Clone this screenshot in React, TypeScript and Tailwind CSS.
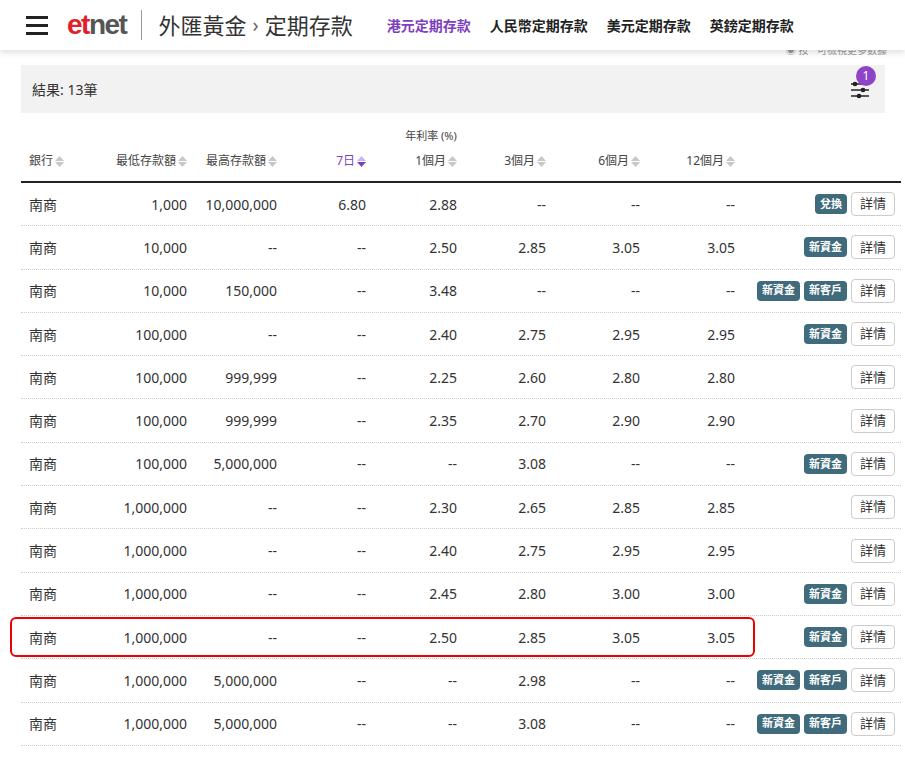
import React from "react";

type Row = { min: string; max: string; d7: string; m1: string; m3: string; m6: string; m12: string; tags: string[]; hl?: boolean };

const rows: Row[] = [
  { min: "1,000", max: "10,000,000", d7: "6.80", m1: "2.88", m3: "--", m6: "--", m12: "--", tags: ["兌換"] },
  { min: "10,000", max: "--", d7: "--", m1: "2.50", m3: "2.85", m6: "3.05", m12: "3.05", tags: ["新資金"] },
  { min: "10,000", max: "150,000", d7: "--", m1: "3.48", m3: "--", m6: "--", m12: "--", tags: ["新資金", "新客戶"] },
  { min: "100,000", max: "--", d7: "--", m1: "2.40", m3: "2.75", m6: "2.95", m12: "2.95", tags: ["新資金"] },
  { min: "100,000", max: "999,999", d7: "--", m1: "2.25", m3: "2.60", m6: "2.80", m12: "2.80", tags: [] },
  { min: "100,000", max: "999,999", d7: "--", m1: "2.35", m3: "2.70", m6: "2.90", m12: "2.90", tags: [] },
  { min: "100,000", max: "5,000,000", d7: "--", m1: "--", m3: "3.08", m6: "--", m12: "--", tags: ["新資金"] },
  { min: "1,000,000", max: "--", d7: "--", m1: "2.30", m3: "2.65", m6: "2.85", m12: "2.85", tags: [] },
  { min: "1,000,000", max: "--", d7: "--", m1: "2.40", m3: "2.75", m6: "2.95", m12: "2.95", tags: [] },
  { min: "1,000,000", max: "--", d7: "--", m1: "2.45", m3: "2.80", m6: "3.00", m12: "3.00", tags: ["新資金"] },
  { min: "1,000,000", max: "--", d7: "--", m1: "2.50", m3: "2.85", m6: "3.05", m12: "3.05", tags: ["新資金"], hl: true },
  { min: "1,000,000", max: "5,000,000", d7: "--", m1: "--", m3: "2.98", m6: "--", m12: "--", tags: ["新資金", "新客戶"] },
  { min: "1,000,000", max: "5,000,000", d7: "--", m1: "--", m3: "3.08", m6: "--", m12: "--", tags: ["新資金", "新客戶"] },
];

const grid = "grid grid-cols-[80px_94px_90px_89px_91px_89px_94px_95px_1fr]";

function Sort({ active }: { active?: boolean }) {
  return (
    <span className="inline-flex flex-col ml-0.5 leading-none">
      <svg width="9" height="5" viewBox="0 0 9 5"><path d="M0 5L4.5 0L9 5Z" fill={active ? "#c4b5fd" : "#c7c7c7"} /></svg>
      <svg width="9" height="5" viewBox="0 0 9 5" className="mt-[1px]"><path d="M0 0L4.5 5L9 0Z" fill={active ? "#7e3fbf" : "#c7c7c7"} /></svg>
    </span>
  );
}

function H({ label, active, left }: { label: string; active?: boolean; left?: boolean }) {
  return (
    <div className={`flex items-center px-2 ${left ? "justify-start" : "justify-end"} ${active ? "text-[#7e3fbf]" : "text-[#444]"}`}>
      {label}
      <Sort active={active} />
    </div>
  );
}

export default function App() {
  return (
    <div className="w-[905px] h-[757px] overflow-hidden bg-white text-[#333]" style={{ fontFamily: '"Noto Sans", "Noto Sans CJK TC", sans-serif' }}>
      <header className="h-[50px] flex items-center shadow-[0_3px_6px_rgba(0,0,0,0.12)] relative z-10 bg-white">
        <div className="ml-[26px] flex flex-col gap-[5px]">
          <span className="block w-[22px] h-[3px] bg-[#222]" />
          <span className="block w-[22px] h-[3px] bg-[#222]" />
          <span className="block w-[22px] h-[3px] bg-[#222]" />
        </div>
        <span className="ml-[19px] text-[28px] font-bold tracking-[-1.5px] leading-none" style={{ fontFamily: '"Liberation Sans", Arial, sans-serif' }}>
          <span className="text-[#e0202a]">et</span><span className="text-[#555]">net</span>
        </span>
        <span className="ml-[15px] w-px h-[30px] bg-[#999]" />
        <span className="ml-[16px] text-[22px] text-[#333]">外匯黃金</span>
        <span className="mx-[6px] text-[20px] text-[#666]">›</span>
        <span className="text-[22px] text-[#333]">定期存款</span>
        <nav className="ml-[34px] flex gap-[19px] text-[14px] font-bold">
          <span className="text-[#7e3fbf]">港元定期存款</span>
          <span className="text-[#222]">人民幣定期存款</span>
          <span className="text-[#222]">美元定期存款</span>
          <span className="text-[#222]">英鎊定期存款</span>
        </nav>
      </header>

      <div className="h-[15px] flex justify-end pr-[18px] text-[10px] text-[#999] leading-none overflow-hidden">
        <span className="-mt-[5px]">◉ 按 ⁺ 可檢視更多數據</span>
      </div>

      <div className="mx-[21px] w-[864px] h-[48px] bg-[#f2f2f2] flex items-center justify-between px-[11px]">
        <span className="text-[14px] text-[#333]">結果: 13筆</span>
        <div className="relative mr-[4px] mt-[2px]">
          <svg width="20" height="20" viewBox="0 0 20 20" stroke="#222" strokeWidth="1.5">
            <line x1="1" y1="4" x2="19" y2="4" /><circle cx="5" cy="4" r="1.6" fill="#222" />
            <line x1="1" y1="10" x2="19" y2="10" /><circle cx="13" cy="10" r="1.6" fill="#222" />
            <line x1="1" y1="16" x2="19" y2="16" /><circle cx="9" cy="16" r="1.6" fill="#222" />
          </svg>
          <span className="absolute -top-[14px] left-[6px] w-[20px] h-[20px] rounded-full bg-[#8e44c8] text-white text-[12px] flex items-center justify-center">1</span>
        </div>
      </div>

      <div className="ml-[21px] w-[880px]">
        <div className="h-[32px] flex items-end justify-center text-[11px] text-[#444] pb-[1px] pr-[60px]">年利率 (%)</div>
        <div className={`${grid} h-[38px] items-center text-[12px] border-b-2 border-[#222] pb-[4px]`}>
          <H label="銀行" left />
          <H label="最低存款額" />
          <H label="最高存款額" />
          <H label="7日" active />
          <H label="1個月" />
          <H label="3個月" />
          <H label="6個月" />
          <H label="12個月" />
          <div />
        </div>
        {rows.map((r, i) => (
          <div key={i} className={`${grid} relative h-[43.3px] items-center text-[14px] text-[#333] border-b border-dotted border-[#ccc]`}>
            {r.hl && <div className="absolute -left-[11px] top-[1px] w-[745px] h-[40px] border-2 border-[#e00] rounded-[6px]" />}
            <div className="px-2">南商</div>
            <div className="px-2 text-right">{r.min}</div>
            <div className="px-2 text-right">{r.max}</div>
            <div className="px-2 text-right">{r.d7}</div>
            <div className="px-2 text-right">{r.m1}</div>
            <div className="px-2 text-right">{r.m3}</div>
            <div className="px-2 text-right">{r.m6}</div>
            <div className="px-2 text-right">{r.m12}</div>
            <div className="flex items-center justify-end gap-[4px] pr-[6px]">
              {r.tags.map((t, j) => (
                <span key={j} className="bg-[#3f6b7c] text-white text-[11px] font-bold rounded-[4px] px-[5px] h-[20px] flex items-center">{t}</span>
              ))}
              <span className="border border-[#ccc] rounded-[4px] px-[8px] h-[24px] flex items-center text-[13px] text-[#333]">詳情</span>
            </div>
          </div>
        ))}
      </div>
    </div>
  );
}
